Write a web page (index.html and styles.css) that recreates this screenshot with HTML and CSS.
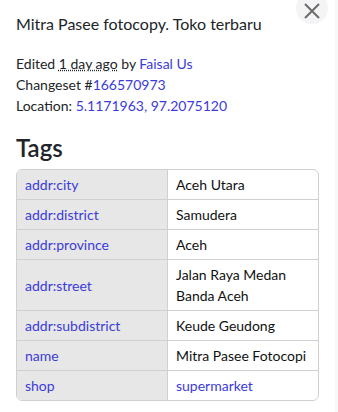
FILE: index.html
```html
<!DOCTYPE html>
<html lang="en">
<head>
  <meta charset="UTF-8" />
  <meta name="viewport" content="width=device-width, initial-scale=1.0">
  <title>Node: Mitra Pasee fotocopy</title>
  <link rel="stylesheet" href="styles.css">
</head>
<body>
  <div class="sidebar">
    <button class="close" aria-label="Close">
      <svg width="18" height="18" viewBox="0 0 18 18"><path d="M2 2 L16 16 M16 2 L2 16" stroke="#6c6c6c" stroke-width="2" fill="none"/></svg>
    </button>

    <h2 class="title">Mitra Pasee fotocopy. Toko terbaru</h2>

    <div class="details">
      <div>Edited <abbr title="2025-05-20">1 day ago</abbr> by <a href="#">Faisal Us</a></div>
      <div>Changeset #<a href="#">166570973</a></div>
      <div>Location: <a href="#">5.1171963, 97.2075120</a></div>
    </div>

    <h3 class="tags-title">Tags</h3>
    <div class="tags">
      <table>
        <tr><th><a href="#">addr:city</a></th><td>Aceh Utara</td></tr>
        <tr><th><a href="#">addr:district</a></th><td>Samudera</td></tr>
        <tr><th><a href="#">addr:province</a></th><td>Aceh</td></tr>
        <tr><th><a href="#">addr:street</a></th><td>Jalan Raya Medan Banda Aceh</td></tr>
        <tr><th><a href="#">addr:subdistrict</a></th><td>Keude Geudong</td></tr>
        <tr><th><a href="#">name</a></th><td>Mitra Pasee Fotocopi</td></tr>
        <tr><th><a href="#">shop</a></th><td><a href="#">supermarket</a></td></tr>
      </table>
    </div>
  </div>
</body>
</html>
```

FILE: styles.css
```css
body {
  margin: 0;
  font-family: Lato, "Noto Sans", sans-serif;
  font-size: 14px;
  line-height: 21px;
  color: #212529;
  background: white;
}
.sidebar {
  position: relative;
  height: 412px;
  padding: 12px 16px 0 16px;
  box-sizing: border-box;
  border-right: 3px solid #f8f8f8;
}
a {
  color: #3b3bdb;
  text-decoration: none;
}
abbr {
  text-decoration: underline dotted;
}
.close {
  position: absolute;
  top: -8px;
  right: 7px;
  width: 32px;
  height: 32px;
  border: none;
  border-radius: 50%;
  background: #f4f4f6;
  display: flex;
  align-items: center;
  justify-content: center;
  padding: 0;
  padding-top: 6px;
}
.title {
  font-size: 16px;
  font-weight: normal;
  line-height: 24px;
  margin: 0 0 17px 0;
}
.details {
  margin-bottom: 18px;
}
.tags-title {
  font-size: 24px;
  font-weight: 600;
  line-height: 28px;
  margin: 0 0 7px 0;
}
.tags {
  border: 1px solid #d0d0d0;
  border-radius: 6px;
  overflow: hidden;
}
table {
  width: 100%;
  border-collapse: collapse;
  table-layout: fixed;
}
th, td {
  padding: 4px 8px;
  text-align: left;
  font-weight: normal;
  vertical-align: middle;
  border-top: 1px solid #d0d0d0;
}
tr:first-child th, tr:first-child td {
  border-top: none;
}
th {
  box-sizing: border-box;
  background: #e7e7e7;
  border-right: 1px solid #d0d0d0;
  width: 50%;
}
td {
  color: #111;
}
```
